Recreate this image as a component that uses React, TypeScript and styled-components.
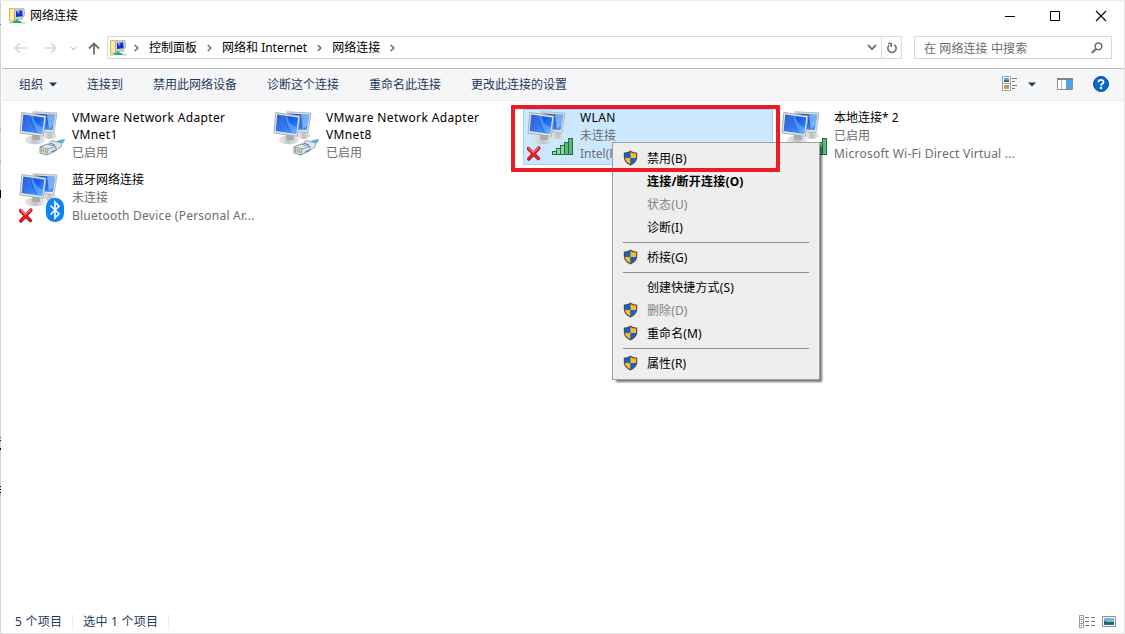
import type { ReactNode } from "react";
import styled, { createGlobalStyle } from "styled-components";

const GlobalStyle = createGlobalStyle`
    * {
        box-sizing: border-box;
    }
    body {
        margin: 0;
        background: #fff;
        font-family: "Noto Sans", "Noto Sans CJK SC", sans-serif;
        font-size: 12px;
        color: #000;
    }
    svg {
        display: block;
        flex: none;
    }
`;

// dark specks of the page behind the window, seen along its left edge: [top, height, colour]
const specks: [number, number, string][] = [
    [24, 1, "#777"],
    [129, 1, "#888"],
    [161, 1, "#888"],
    [190, 8, "#000"],
    [437, 1, "#555"],
    [440, 1, "#000"],
    [448, 2, "#000"],
    [486, 1, "#000"],
    [489, 1, "#000"],
    [492, 1, "#000"],
    [494, 1, "#888"],
];

const edge = [
    ...specks.map(([top, h, color]) => `linear-gradient(${color}, ${color}) 0 ${top - 1}px / 1px ${h}px no-repeat`),
    "linear-gradient(#d4d4d4, #d4d4d4) 0 0 / 1px 100% no-repeat",
    "#fff",
].join(", ");

const Window = styled.div`
    width: 1125px;
    height: 634px;
    display: flex;
    flex-direction: column;
    background: ${edge};
    border: 1px solid #e4e4e4;
    border-width: 1px 1px 1px 0;
    padding-left: 1px;
    border-top-color: #ededed;
    border-bottom-color: #e2e2e2;
    overflow: hidden;
`;

const TitleBar = styled.div`
    display: flex;
    align-items: center;
    height: 29px;
    padding: 0 17px 0 8px;
    flex: none;
`;

const Title = styled.div`
    flex: 1;
    padding-left: 5px;
    line-height: 18px;
`;

const WindowButtons = styled.div`
    display: flex;
    gap: 34px;
`;

const AddressRow = styled.div`
    display: flex;
    align-items: center;
    height: 38px;
    padding: 0 12px 3px 13px;
    flex: none;
`;

const NavButtons = styled.div`
    display: flex;
    align-items: center;
    width: 93px;
    padding-top: 1px;
`;

const AddressBox = styled.div`
    display: flex;
    align-items: center;
    width: 795px;
    height: 23px;
    border: 1px solid #d9d9d9;
    padding-left: 2px;
    margin-right: 12px;
`;

const Crumb = styled.div`
    padding: 0 10px;
    line-height: 18px;
    white-space: nowrap;
`;

const AddressEnd = styled.div`
    display: flex;
    align-items: center;
    margin-left: auto;
    height: 100%;
`;

const Refresh = styled.div`
    display: flex;
    align-items: center;
    justify-content: center;
    width: 20px;
    height: 100%;
    margin-left: 4px;
    border-left: 1px solid #d9d9d9;
`;

const SearchBox = styled.div`
    display: flex;
    align-items: center;
    justify-content: space-between;
    width: 198px;
    height: 23px;
    border: 1px solid #d9d9d9;
    padding: 0 8px 0 9px;
    color: #6d6d6d;
    letter-spacing: 0.1px;
    flex: none;
`;

const Toolbar = styled.div`
    display: flex;
    align-items: center;
    height: 33px;
    border-top: 1px solid #bcbcbc;
    border-bottom: 1px solid #e9ebee;
    background: #f5f6f8;
    color: #1e395b;
    padding: 0 15px 0 17px;
    margin-left: 1px;
    flex: none;
`;

const Commands = styled.div`
    display: flex;
    gap: 30px;
    flex: 1;
`;

const Command = styled.div`
    display: flex;
    align-items: center;
    gap: 6px;
    line-height: 18px;
`;

const ToolIcons = styled.div`
    display: flex;
    align-items: center;
    padding-bottom: 1px;
`;

const Gap = styled.div<{ $w: number }>`
    width: ${(p) => p.$w}px;
`;

const Content = styled.div`
    position: relative;
    flex: 1;
    padding: 8px 0 0 14px;
`;

const Grid = styled.div`
    display: grid;
    grid-template-columns: repeat(4, 250px);
    grid-auto-rows: 56px;
    gap: 6px 4px;
`;

const Item = styled.div<{ $selected?: boolean }>`
    display: flex;
    gap: 5px;
    padding-left: 3px;
    border: 1px solid ${(p) => (p.$selected ? "#99d1ff" : "transparent")};
    background: ${(p) => (p.$selected ? "#cce8ff" : "transparent")};
`;

const ItemText = styled.div`
    flex: 1;
    min-width: 0;
    margin-top: -1px;
    font-size: 12px;
`;

const Line = styled.div<{ $muted?: boolean; $spacing?: number }>`
    height: 18px;
    line-height: 18px;
    color: ${(p) => (p.$muted ? "#6d6d6d" : "#000")};
    letter-spacing: ${(p) => p.$spacing ?? 0}px;
    white-space: nowrap;
`;

const Name = styled(Line)`
    height: auto;
    line-height: 17px;
    padding-bottom: 1px;
    white-space: pre-line;
`;

const Highlight = styled.div`
    position: absolute;
    left: 510px;
    top: 4px;
    width: 269px;
    height: 67px;
    border: 4px solid #ed1c24;
    border-radius: 1px;
    z-index: 2;
`;

const Menu = styled.div`
    position: absolute;
    left: 611px;
    top: 41px;
    width: 208px;
    height: 238px;
    padding: 4px 3px;
    background: #eee;
    border: 1px solid #a0a0a0;
    box-shadow: 3px 3px 2px -1px rgba(0, 0, 0, 0.55);
    z-index: 1;
`;

const MenuItem = styled.div<{ $bold?: boolean; $disabled?: boolean }>`
    display: flex;
    align-items: center;
    height: 23px;
    line-height: 23px;
    font-weight: ${(p) => (p.$bold ? 700 : 400)};
    letter-spacing: ${(p) => (p.$bold ? 0.2 : 0.12)}px;
    color: ${(p) => (p.$disabled ? "#838383" : "#000")};
`;

const MenuIcon = styled.div`
    width: 31px;
    padding: 0 0 1px 7px;
`;

const Separator = styled.div`
    height: 1px;
    margin: 3px 7px;
    background: #919191;
`;

const StatusBar = styled.div`
    display: flex;
    align-items: center;
    height: 24px;
    padding: 1px 8px 0 14px;
    color: #1e395b;
    flex: none;
`;

const StatusText = styled.div`
    height: 16px;
    line-height: 16px;
    padding-right: 10px;
    margin-right: 10px;
    letter-spacing: 0.25px;
    border-right: 1px solid #ececec;
`;

const ViewButtons = styled.div`
    display: flex;
    align-items: center;
    gap: 7px;
    margin-left: auto;
    padding-bottom: 1px;
`;

function NetworkIcon() {
    return (
        <svg width="16" height="16" viewBox="0 0 16 16">
            <path d="M.5 .5h4l1 1V13h-5z" fill="#ffeb9a" stroke="#cdb566" />
            <path d="M5.5.8h9.500l.5 6-2.500 4.200H5.500z" fill="#d4d8da" stroke="#a4abaf" />
            <path d="M7 3l6-.7.8 6L7 9z" fill="#1230c4" />
            <path d="M8 3l3-.4L9 6.500z" fill="#94a8f0" />
            <path d="M6.500 11.500h3V13H12v2H4v-2h2.500z" fill="#19b36b" />
            <path d="M0 14h4v1.500H0zM12 14h4v1.500h-4z" fill="#c3c9c9" />
        </svg>
    );
}

function Chevron() {
    return (
        <svg width="5" height="8" viewBox="0 0 5 8" fill="none" stroke="#6b6b6b" strokeWidth="1.500">
            <path d="M.8 1l3 3-3 3" />
        </svg>
    );
}

function Triangle() {
    return (
        <svg width="8" height="5" viewBox="0 0 8 5">
            <path d="M0 .5h8L4 4.500z" fill="#1e395b" />
        </svg>
    );
}

function Shield() {
    return (
        <svg width="15" height="16" viewBox="0 0 15 16">
            <path
                d="M7.500.5C5.500 1.900 3.500 2.500.8 2.500V7c0 4 2.700 6.600 6.700 8.500 4-1.900 6.700-4.500 6.700-8.500V2.500C11.500 2.500 9.500 1.900 7.500.5z"
                fill="#4a4a4a"
            />
            <path d="M7.500 1.900V8H1.900V3.500C4 3.400 5.900 2.900 7.500 1.900z" fill="#0f66c8" />
            <path d="M7.500 1.900V8h5.600V3.500C11 3.400 9.100 2.900 7.500 1.900z" fill="#fdb92e" />
            <path d="M7.500 8v6.300C4.200 12.600 2.200 10.800 1.900 8z" fill="#fdb92e" />
            <path d="M7.500 8v6.300c3.300-1.700 5.300-3.500 5.600-6.300z" fill="#0f66c8" />
        </svg>
    );
}

function Cable() {
    return (
        <g>
            <path d="M35 33c3-2.500 6-3.500 11-4l-1 3.500c-3 .5-5 2-8 4z" fill="#4fb8d4" />
            <path d="M28 35l5-4.500 6 1.500 4 1-1 4-6 4-2 1z" fill="#dfe6ee" stroke="#8094ad" strokeWidth=".8" />
            <path d="M21 37l7-3 9 2.500v4L28 45l-7-2z" fill="#dde4ec" stroke="#6f86a3" strokeWidth=".9" />
            <path d="M21 37l8 2 8-2.500M29 39l-1 6" fill="none" stroke="#7b90ac" strokeWidth=".8" />
            <path d="M31 33l5 2M32 42l4-2" fill="none" stroke="#5f7593" />
            <path d="M22.500 38.500v3.500M24.700 39v3.500M26.900 39.500V43" stroke="#a6a23c" strokeWidth="1.200" />
        </g>
    );
}

function Cross() {
    return (
        <g transform="translate(-.7 -1)">
            <path d="M2 39.500l10 10M12.500 39L2.500 50" stroke="#9c1519" strokeWidth="3.400" strokeLinecap="round" />
            <path d="M2 39l10 10.500M12.500 38.800L2.500 49.500" stroke="#ee1c23" strokeWidth="2.500" strokeLinecap="round" />
            <path d="M2.500 39l4.500 4.500 5-4.500" fill="none" stroke="#f6777b" strokeWidth="1.200" strokeLinecap="round" />
        </g>
    );
}

function Signal() {
    const bars = [3, 6, 9, 12, 16];
    return (
        <g stroke="#1e7441">
            {bars.map((h, i) => (
                <rect key={h} x={25.5 + i * 4} y={44.5 - h} width="4" height={h} fill={i < 3 ? "#9bd0a6" : "#62b37d"} />
            ))}
        </g>
    );
}

function Bluetooth() {
    return (
        <g>
            <rect x="27" y="26" width="18" height="24" rx="8.500" fill="#0a84f6" />
            <path d="M31.500 33.500l8.500 8.300-4 4.200V30l4 4.200-8.500 8.300" fill="none" stroke="#fff" strokeWidth="1.600" />
        </g>
    );
}

function ConnectionIcon({ children }: { children?: ReactNode }) {
    return (
        <svg width="48" height="54" viewBox="0 0 48 54">
            <defs>
                <linearGradient id="screen" x1="0" y1="0" x2="1" y2="1">
                    <stop offset="0" stopColor="#0b49cc" />
                    <stop offset=".45" stopColor="#1660e6" />
                    <stop offset=".6" stopColor="#1f6cf2" />
                    <stop offset="1" stopColor="#4ba0ff" />
                </linearGradient>
                <linearGradient id="stand" x1="0" y1="0" x2="1" y2="0">
                    <stop offset="0" stopColor="#ececec" />
                    <stop offset=".5" stopColor="#bfc1c3" />
                    <stop offset="1" stopColor="#eeeeee" />
                </linearGradient>
            </defs>
            <ellipse cx="31" cy="25.500" rx="7" ry="3.500" fill="url(#stand)" />
            <path d="M14 1.800L38 3l-3 19.500-19-1z" fill="#dfe2e3" stroke="#aeb3b5" strokeWidth=".9" />
            <path d="M16 3.500l20.300 1.200L33.700 20 18 19z" fill="url(#screen)" />
            <path d="M28 4.300l8.300.4L34.500 15 30 19z" fill="#9ccbfb" opacity=".7" />
            <ellipse cx="16" cy="30" rx="9.500" ry="4" fill="url(#stand)" stroke="#c9cbcc" strokeWidth=".6" />
            <path d="M13 25h7l1.500 5h-8z" fill="#a9acae" />
            <path d="M2.800 2.500L27 6l-2.700 20.300L1 23z" fill="#e3e6e7" stroke="#a0a7aa" strokeWidth=".9" />
            <path d="M4.300 4.400l21 3-2.200 16.500L2.700 21z" fill="url(#screen)" />
            <path d="M12 5.500c-1 5 2 12 5 17.500L2.700 21l1.600-16.600z" fill="#fff" opacity=".13" />
            <path d="M12 5.500c0 5 4 13 7 17.800l4 .6.800-6C18 15 15 11 14.500 5.900z" fill="#8cc4ff" opacity=".45" />
            {children}
        </svg>
    );
}

const menu = [
    { label: "禁用(B)", shield: true },
    { label: "连接/断开连接(O)", bold: true },
    { label: "状态(U)", disabled: true },
    { label: "诊断(I)" },
    null,
    { label: "桥接(G)", shield: true },
    null,
    { label: "创建快捷方式(S)" },
    { label: "删除(D)", shield: true, disabled: true },
    { label: "重命名(M)", shield: true },
    null,
    { label: "属性(R)", shield: true },
];

function ContextMenu() {
    return (
        <Menu>
            {menu.map((item, i) =>
                item ? (
                    <MenuItem key={i} $bold={item.bold} $disabled={item.disabled}>
                        <MenuIcon>{item.shield && <Shield />}</MenuIcon>
                        {item.label}
                    </MenuItem>
                ) : (
                    <Separator key={i} />
                ),
            )}
        </Menu>
    );
}

function App() {
    return (
        <>
            <GlobalStyle />
            <Window>
                <TitleBar>
                    <NetworkIcon />
                    <Title>网络连接</Title>
                    <WindowButtons>
                        <svg width="12" height="12" viewBox="0 0 12 12">
                            <path d="M2 6.500h10" stroke="#000" />
                        </svg>
                        <svg width="12" height="12" viewBox="0 0 12 12">
                            <path d="M1.500 1.500h9v9h-9z" fill="none" stroke="#000" />
                        </svg>
                        <svg width="12" height="12" viewBox="0 0 12 12">
                            <path d="M1 1l10 10M11 1L1 11" stroke="#000" strokeWidth="1.100" />
                        </svg>
                    </WindowButtons>
                </TitleBar>
                <AddressRow>
                    <NavButtons>
                        <svg width="13" height="12" viewBox="0 0 13 12" fill="none" stroke="#d6d6d6" strokeWidth="1.500">
                            <path d="M12.500 6H1.500M6 1L1 6l5 5" />
                        </svg>
                        <Gap $w={17} />
                        <svg width="13" height="12" viewBox="0 0 13 12" fill="none" stroke="#d6d6d6" strokeWidth="1.500">
                            <path d="M.5 6h11M7 1l5 5-5 5" />
                        </svg>
                        <Gap $w={13} />
                        <svg width="7" height="5" viewBox="0 0 7 5" fill="none" stroke="#cfcfcf" strokeWidth="1.400">
                            <path d="M.8 1l2.700 2.700L6.200 1" />
                        </svg>
                        <Gap $w={11} />
                        <svg width="12" height="13" viewBox="0 0 12 13" fill="none" stroke="#6e6e6e" strokeWidth="1.800">
                            <path d="M6 12.500V1.500M1 6.500l5-5 5 5" />
                        </svg>
                    </NavButtons>
                    <AddressBox>
                        <NetworkIcon />
                        <Gap $w={8} />
                        <Chevron />
                        <Crumb>控制面板</Crumb>
                        <Chevron />
                        <Crumb>网络和 Internet</Crumb>
                        <Chevron />
                        <Crumb>网络连接</Crumb>
                        <Chevron />
                        <AddressEnd>
                            <svg width="10" height="7" viewBox="0 0 10 7" fill="none" stroke="#707070" strokeWidth="1.700">
                                <path d="M1 1.200l4 4 4-4" />
                            </svg>
                            <Refresh>
                                <svg width="12" height="12" viewBox="0 0 12 12" fill="none" stroke="#6f6f6f" strokeWidth="1.600">
                                    <path d="M8.300 2.700A4.200 4.200 0 1 1 3 3.300M2 1.500h3.200v3.400" />
                                </svg>
                            </Refresh>
                        </AddressEnd>
                    </AddressBox>
                    <SearchBox>
                        在 网络连接 中搜索
                        <svg width="12" height="12" viewBox="0 0 12 12" fill="none" stroke="#6e6e6e">
                            <circle cx="7.500" cy="4.300" r="3.400" strokeWidth="1.500" />
                            <path d="M5 6.800L.8 11" strokeWidth="2" />
                        </svg>
                    </SearchBox>
                </AddressRow>
                <Toolbar>
                    <Commands>
                        <Command>
                            组织
                            <Triangle />
                        </Command>
                        <Command>连接到</Command>
                        <Command>禁用此网络设备</Command>
                        <Command>诊断这个连接</Command>
                        <Command>重命名此连接</Command>
                        <Command>更改此连接的设置</Command>
                    </Commands>
                    <ToolIcons>
                        <svg width="16" height="16" viewBox="0 0 16 16">
                            <path d="M.5.5h8v7h-8zM.5 7.500h8v7h-8z" fill="#fff" stroke="#a0a0a0" />
                            <path d="M2 2h5v4H2z" fill="#58a3e0" />
                            <path d="M2 4.500h5V6H2z" fill="#285a4c" />
                            <path d="M2 9h5v4H2z" fill="#a7b64c" />
                            <path d="M4 9h3v2.500H4z" fill="#df7b3b" />
                            <path d="M10 2.500h5M10 5.500h3M10 9.500h5M10 12.500h3" stroke="#7d7d7d" />
                        </svg>
                        <Gap $w={10} />
                        <Triangle />
                        <Gap $w={21} />
                        <svg width="16" height="12" viewBox="0 0 16 12">
                            <path d="M.5.5h15v11H.5z" fill="#fff" stroke="#8e8e8e" />
                            <path d="M0 0h16v2H0z" fill="#838383" />
                            <path d="M4.500 2v9" stroke="#b8b8b8" />
                            <path d="M9 2h6v9H9z" fill="#4aa3e8" />
                        </svg>
                        <Gap $w={20} />
                        <svg width="16" height="16" viewBox="0 0 16 16">
                            <circle cx="8" cy="8" r="7.500" fill="#0a67cb" stroke="#064a93" />
                            <path d="M5.600 6.200C5.600 3 10.500 3.200 10.500 6c0 1.800-2.400 1.900-2.400 3.700" fill="none" stroke="#fff" strokeWidth="1.900" />
                            <circle cx="8" cy="12" r="1.200" fill="#fff" />
                        </svg>
                    </ToolIcons>
                </Toolbar>
                <Content>
                    <Grid>
                        <Item>
                            <ConnectionIcon>
                                <Cable />
                            </ConnectionIcon>
                            <ItemText>
                                <Name $spacing={0.36}>{"VMware Network Adapter\nVMnet1"}</Name>
                                <Line $muted>已启用</Line>
                            </ItemText>
                        </Item>
                        <Item>
                            <ConnectionIcon>
                                <Cable />
                            </ConnectionIcon>
                            <ItemText>
                                <Name $spacing={0.36}>{"VMware Network Adapter\nVMnet8"}</Name>
                                <Line $muted>已启用</Line>
                            </ItemText>
                        </Item>
                        <Item $selected>
                            <ConnectionIcon>
                                <Cross />
                                <Signal />
                            </ConnectionIcon>
                            <ItemText>
                                <Name $spacing={0.36}>WLAN</Name>
                                <Line $muted>未连接</Line>
                                <Line $muted>Intel(R)</Line>
                            </ItemText>
                        </Item>
                        <Item>
                            <ConnectionIcon>
                                <Signal />
                            </ConnectionIcon>
                            <ItemText>
                                <Name>本地连接* 2</Name>
                                <Line $muted>已启用</Line>
                                <Line $muted $spacing={0.24}>
                                    Microsoft Wi-Fi Direct Virtual ...
                                </Line>
                            </ItemText>
                        </Item>
                        <Item>
                            <ConnectionIcon>
                                <Cross />
                                <Bluetooth />
                            </ConnectionIcon>
                            <ItemText>
                                <Name>蓝牙网络连接</Name>
                                <Line $muted>未连接</Line>
                                <Line $muted $spacing={0.23}>
                                    Bluetooth Device (Personal Ar...
                                </Line>
                            </ItemText>
                        </Item>
                    </Grid>
                    <ContextMenu />
                    <Highlight />
                </Content>
                <StatusBar>
                    <StatusText>5 个项目</StatusText>
                    <StatusText>选中 1 个项目</StatusText>
                    <ViewButtons>
                        <svg width="16" height="13" viewBox="0 0 16 13">
                            <path d="M.5.5h4v4h-4zM.5 4.500h4v4h-4zM.5 8.500h4v4h-4z" fill="#fff" stroke="#9a9a9a" />
                            <path d="M2 2h1v1H2z" fill="#2e8b3a" />
                            <path d="M2 6h1v1H2z" fill="#3b82e6" />
                            <path d="M2 10h1v1H2z" fill="#e02020" />
                            <path d="M6 2.500h4M12 2.500h4M6 6.500h4M12 6.500h4M6 10.500h4M12 10.500h4" stroke="#7a7a7a" />
                        </svg>
                        <svg width="14" height="11" viewBox="0 0 14 11">
                            <path d="M.5.5h13v10H.5z" fill="#fff" stroke="#8f8f8f" />
                            <path d="M2 2h10v7H2z" fill="#76b3e4" />
                            <path d="M2 5l4 1 6 0v3H2z" fill="#2f6159" />
                            <path d="M2 8h10v1H2z" fill="#2d6fb4" />
                        </svg>
                    </ViewButtons>
                </StatusBar>
            </Window>
        </>
    );
}

export default App;
